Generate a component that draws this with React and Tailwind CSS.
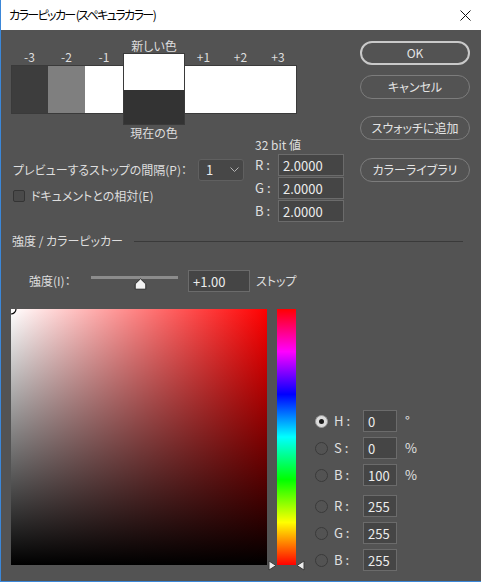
import React from 'react'

const font = "font-['Noto_Sans_CJK_JP',sans-serif] [font-feature-settings:'palt']"

function Side({ label, color, first, last, wide }) {
  return (
    <div className={`flex flex-col items-center ${wide ? 'w-[38px]' : 'w-[37px]'}`}>
      <div className="mt-[12px] h-[14px] leading-[14px] text-[12px] text-[#dedede]">{label}</div>
      <div
        className={`mt-[1px] h-[49px] w-full border-y border-[#3a3a3a] ${first ? 'border-l' : ''} ${last ? 'border-r' : ''} ${color}`}
      />
    </div>
  )
}

function Btn({ children, primary }) {
  return (
    <div
      className={`h-[24px] w-[110px] rounded-full flex items-center justify-center text-[12px] text-[#e4e4e4] ${
        primary ? 'border-2 border-[#c9c9c9]' : 'border border-[#7c7c7c]'
      }`}
    >
      {children}
    </div>
  )
}

function Field({ value, w = 'w-[34px]' }) {
  return (
    <div className={`h-[22px] ${w} bg-[#454545] border border-[#6b6b6b] flex items-center pl-[4px] text-[13px] text-[#ececec] leading-none`}>
      {value}
    </div>
  )
}

function Radio({ on }) {
  return on ? (
    <div className="w-[13px] h-[13px] rounded-full bg-[#dcdcdc] border border-[#9a9a9a] flex items-center justify-center">
      <div className="w-[5px] h-[5px] rounded-full bg-[#1a1a1a]" />
    </div>
  ) : (
    <div className="w-[13px] h-[13px] rounded-full border-[1.5px] border-[#3a3a3a]" />
  )
}

function Row({ on, label, value, unit, className = '' }) {
  return (
    <div className={`flex items-center h-[22px] ${className}`}>
      <Radio on={on} />
      <div className="ml-[6px] w-[29px] text-[13px] text-[#e0e0e0]">{label}</div>
      <Field value={value} />
      {unit && <div className="ml-[8px] text-[13px] text-[#e0e0e0]">{unit}</div>}
    </div>
  )
}

export default function App() {
  return (
    <div className={`w-[481px] h-[582px] bg-[#535353] border-l border-b border-[#3b87d8] flex flex-col overflow-hidden ${font}`}>
      {/* title bar */}
      <div className="h-[30px] bg-white flex items-center pl-[8px] pr-[10px] shrink-0">
        <div className="text-[12px] text-black tracking-[-1.6px]">カラーピッカー (スペキュラカラー)</div>
        <svg className="ml-auto" width="11" height="11" viewBox="0 0 11 11">
          <path d="M0.5 0.5 L10.5 10.5 M10.5 0.5 L0.5 10.5" stroke="#111" strokeWidth="1" />
        </svg>
      </div>

      {/* top section */}
      <div className="flex shrink-0">
        <div className="pl-[10px] pt-[8px]">
          <div className="flex items-start h-[102px]">
            <Side label="-3" color="bg-[#3d3d3d]" first />
            <Side label="-2" color="bg-[#7f7f7f]" />
            <Side label="-1" color="bg-white" wide />
            <div className="flex flex-col items-center w-[62px]">
              <div className="h-[15px] leading-[15px] text-[12px] text-[#dedede]">新しい色</div>
              <div className="h-[72px] w-full border border-[#3a3a3a] flex flex-col">
                <div className="h-[36px] bg-white" />
                <div className="flex-1 bg-[#333333]" />
              </div>
              <div className="mt-[1px] h-[14px] leading-[14px] text-[12px] text-[#dedede]">現在の色</div>
            </div>
            <Side label="+1" color="bg-white" />
            <Side label="+2" color="bg-white" />
            <Side label="+3" color="bg-white" last wide />
          </div>

          <div className="flex h-[86px]">
            <div className="w-[233px] pl-[2px]">
              <div className="mt-[19px] flex items-center h-[22px]">
                <div className="text-[12px] text-[#dedede] w-[185px]">プレビューするストップの間隔(P)：</div>
                <div className="h-[22px] w-[46px] bg-[#474747] border border-[#606060] rounded-[3px] flex items-center pl-[7px] pr-[4px] text-[13px] text-[#ececec]">
                  1
                  <svg className="ml-auto" width="9" height="6" viewBox="0 0 9 6">
                    <path d="M0.5 0.5 L4.5 4.5 L8.5 0.5" stroke="#b5b5b5" fill="none" strokeWidth="1" />
                  </svg>
                </div>
              </div>
              <div className="mt-[8px] flex items-center h-[14px]">
                <div className="w-[12px] h-[12px] border border-[#343434] rounded-[2px] bg-[#4a4a4a]" />
                <div className="ml-[6px] text-[12px] text-[#dedede]">ドキュメントとの相対(E)</div>
              </div>
            </div>
            <div className="ml-[11px] -mt-[2px]">
              <div className="h-[14px] leading-[14px] text-[12px] text-[#dedede]">32 bit 値</div>
              <div className="mt-[2px] flex flex-col gap-[1px]">
                {['R', 'G', 'B'].map((c) => (
                  <div key={c} className="flex items-center h-[22px]">
                    <div className="w-[23px] text-[13px] text-[#e0e0e0]">{c} :</div>
                    <Field value="2.0000" w="w-[66px]" />
                  </div>
                ))}
              </div>
            </div>
          </div>
        </div>

        <div className="ml-auto pr-[11px] pt-[11px] flex flex-col">
          <Btn primary>OK</Btn>
          <div className="mt-[10px]"><Btn>キャンセル</Btn></div>
          <div className="mt-[17px]"><Btn>スウォッチに追加</Btn></div>
          <div className="mt-[18px]"><Btn>カラーライブラリ</Btn></div>
        </div>
      </div>

      {/* section heading */}
      <div className="h-[30px] flex items-center pl-[11px] shrink-0">
        <div className="text-[12px] text-[#dedede]">強度 / カラーピッカー</div>
        <div className="flex-1 ml-[11px] mr-[18px] h-px bg-[#3a3a3a]" />
      </div>

      {/* intensity */}
      <div className="mt-[14px] flex items-center h-[22px] pl-[28px] shrink-0">
        <div className="w-[62px] text-[12px] text-[#dedede]">強度(I)：</div>
        <div className="relative w-[87px] h-[22px]">
          <div className="absolute left-0 right-0 top-[6px] h-[3px] bg-[#8c8c8c]" />
          <svg className="absolute left-[43px] top-[8px]" width="13" height="12" viewBox="0 0 13 12">
            <path d="M6.5 0.8 L11.8 6 L11.8 11.2 L1.2 11.2 L1.2 6 Z" fill="#f2f2f2" stroke="#2a2a2a" strokeWidth="1" strokeLinejoin="round" />
          </svg>
        </div>
        <div className="ml-[10px]">
          <Field value="+1.00" w="w-[62px]" />
        </div>
        <div className="ml-[6px] text-[12px] text-[#dedede]">ストップ</div>
      </div>

      {/* picker */}
      <div className="mt-[17px] flex items-start pl-[10px] shrink-0">
        <div className="relative w-[256px] h-[256px] bg-[linear-gradient(to_right,#ffffff,#ff0000)]">
          <div className="absolute inset-0 bg-[linear-gradient(to_bottom,rgba(0,0,0,0),#000000)]" />
          <svg className="absolute left-0 top-0" width="8" height="8" viewBox="0 0 8 8">
            <circle cx="0" cy="0" r="5" stroke="#000" strokeWidth="1.2" fill="none" />
          </svg>
        </div>
        <div className="relative ml-[10px] w-[19px] h-[256px] bg-[linear-gradient(to_bottom,#ff0000_0%,#ff00ff_16.67%,#0000ff_33.33%,#00ffff_50%,#00ff00_66.67%,#ffff00_83.33%,#ff0000_100%)]">
          <svg className="absolute -left-[9px] -bottom-[6px]" width="9" height="11" viewBox="0 0 9 11">
            <path d="M1 1 L8 5.5 L1 10 Z" fill="#ededed" stroke="#3a3a3a" strokeWidth="1" strokeLinejoin="round" />
          </svg>
          <svg className="absolute -right-[9px] -bottom-[6px]" width="9" height="11" viewBox="0 0 9 11">
            <path d="M8 1 L1 5.5 L8 10 Z" fill="#ededed" stroke="#3a3a3a" strokeWidth="1" strokeLinejoin="round" />
          </svg>
        </div>
        <div className="ml-[19px] mt-[101px] flex flex-col">
          <Row on label="H :" value="0" unit="°" />
          <Row label="S :" value="0" unit="%" className="mt-[5px]" />
          <Row label="B :" value="100" unit="%" className="mt-[5px]" />
          <Row label="R :" value="255" className="mt-[9px]" />
          <Row label="G :" value="255" className="mt-[5px]" />
          <Row label="B :" value="255" className="mt-[5px]" />
        </div>
      </div>
    </div>
  )
}
